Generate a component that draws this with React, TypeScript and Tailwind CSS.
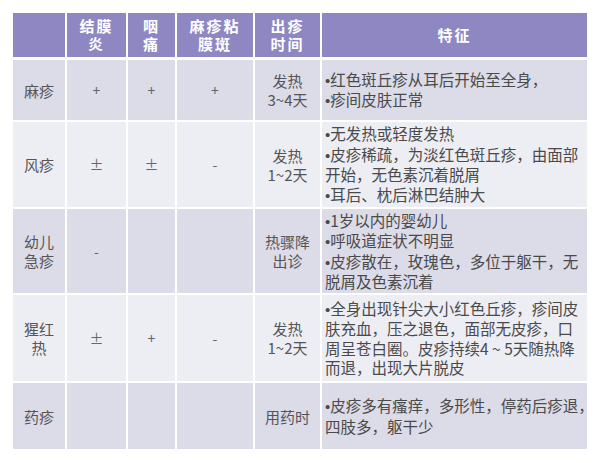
import React from "react";

const H = ({ children, className = "" }: { children: React.ReactNode; className?: string }) => (
  <div className={`bg-[#8e87c2] text-white font-bold text-[15px] leading-[18px] tracking-[2px] flex items-center justify-center text-center ${className}`}>
    {children}
  </div>
);

const C = ({ children, bg, className = "" }: { children?: React.ReactNode; bg: string; className?: string }) => (
  <div className={`${bg} text-[#555] text-[15px] leading-[19px] flex items-center justify-center text-center ${className}`}>
    {children}
  </div>
);

const B = () => (
  <span className="text-[15px]" style={{ fontFamily: '"Liberation Sans", sans-serif' }}>
    •
  </span>
);

const F = ({ lines, bg }: { lines: string[]; bg: string }) => (
  <div className={`${bg} text-[#4a4a4a] text-[15.5px] leading-[19.5px] flex flex-col justify-center pl-[3px] whitespace-nowrap overflow-visible`}>
    {lines.map((l, i) =>
      l.startsWith("•") ? (
        <div key={i}>
          <B />
          {l.slice(1)}
        </div>
      ) : (
        <div key={i}>{l}</div>
      )
    )}
  </div>
);

const S = ({ children }: { children: React.ReactNode }) => <span className="text-[14px] text-[#666]">{children}</span>;

export default function App() {
  const dark = "bg-[#dcdbe8]";
  const light = "bg-[#ededf4]";
  return (
    <div
      className="w-[600px] h-[463px] bg-white pt-[13px] pl-[13px]"
      style={{ fontFamily: '"Noto Sans CJK SC", "Noto Sans", sans-serif' }}
    >
      <div className="grid grid-cols-[52px_59px_47px_76px_65px_265px] grid-rows-[45px_60px_85px_84px_86px_66px] gap-x-[2px] gap-y-[2px] w-[574px] [&>div:nth-child(-n+6)]:mb-[1px]">
        <H>{""}</H>
        <H>结膜<br />炎</H>
        <H>咽<br />痛</H>
        <H>麻疹粘<br />膜斑</H>
        <H>出疹<br />时间</H>
        <H>特征</H>

        <C bg={dark}>麻疹</C>
        <C bg={dark}><S>+</S></C>
        <C bg={dark}><S>+</S></C>
        <C bg={dark}><S>+</S></C>
        <C bg={dark}>发热<br />3~4天</C>
        <F bg={dark} lines={["•红色斑丘疹从耳后开始至全身，", "•疹间皮肤正常"]} />

        <C bg={light}>风疹</C>
        <C bg={light}><S>±</S></C>
        <C bg={light}><S>±</S></C>
        <C bg={light}><S>-</S></C>
        <C bg={light}>发热<br />1~2天</C>
        <F bg={light} lines={["•无发热或轻度发热", "•皮疹稀疏，为淡红色斑丘疹，由面部", "开始，无色素沉着脱屑", "•耳后、枕后淋巴结肿大"]} />

        <C bg={dark}>幼儿<br />急疹</C>
        <C bg={dark}><S>-</S></C>
        <C bg={dark}></C>
        <C bg={dark}></C>
        <C bg={dark}>热骤降<br />出诊</C>
        <F bg={dark} lines={["•1岁以内的婴幼儿", "•呼吸道症状不明显", "•皮疹散在，玫瑰色，多位于躯干，无", "脱屑及色素沉着"]} />

        <C bg={light}>猩红<br />热</C>
        <C bg={light}><S>±</S></C>
        <C bg={light}><S>+</S></C>
        <C bg={light}><S>-</S></C>
        <C bg={light}>发热<br />1~2天</C>
        <F bg={light} lines={["•全身出现针尖大小红色丘疹，疹间皮", "肤充血，压之退色，面部无皮疹，口", "周呈苍白圈。皮疹持续4 ~ 5天随热降", "而退，出现大片脱皮"]} />

        <C bg={dark}>药疹</C>
        <C bg={dark}></C>
        <C bg={dark}></C>
        <C bg={dark}></C>
        <C bg={dark}>用药时</C>
        <F bg={dark} lines={["•皮疹多有瘙痒，多形性，停药后疹退，", "四肢多，躯干少"]} />
      </div>
    </div>
  );
}
